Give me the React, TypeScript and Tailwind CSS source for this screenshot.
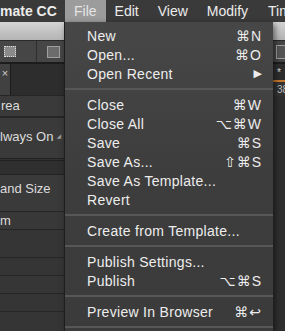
import React from 'react';

type Item = { label: string; keys?: string; arrow?: boolean } | 'sep';

const items: Item[] = [
  { label: 'New', keys: '⌘N' },
  { label: 'Open...', keys: '⌘O' },
  { label: 'Open Recent', arrow: true },
  'sep',
  { label: 'Close', keys: '⌘W' },
  { label: 'Close All', keys: '⌥⌘W' },
  { label: 'Save', keys: '⌘S' },
  { label: 'Save As...', keys: '⇧⌘S' },
  { label: 'Save As Template...' },
  { label: 'Revert' },
  'sep',
  { label: 'Create from Template...' },
  'sep',
  { label: 'Publish Settings...' },
  { label: 'Publish', keys: '⌥⌘S' },
  'sep',
  { label: 'Preview In Browser', keys: '⌘↩' },
  'sep',
];

const font = { fontFamily: '"Liberation Sans", Arial, "DejaVu Sans", sans-serif' };

const MenuBar = () => (
  <div className="flex h-[22px] items-center whitespace-nowrap bg-[#3a3a3a] text-[14px] text-[#ececec]">
    <span className="w-[65px] shrink-0 font-bold">mate CC</span>
    <span className="flex h-full shrink-0 items-center bg-[#9c9c9c] px-[9px] text-[#e4e4e4]">File</span>
    <span className="ml-[9px] shrink-0">Edit</span>
    <span className="ml-[19px] shrink-0">View</span>
    <span className="ml-[19px] shrink-0">Modify</span>
    <span className="ml-[20px] shrink-0">Tim</span>
  </div>
);

const LeftPanels = () => (
  <div className="flex w-[65px] shrink-0 flex-col whitespace-nowrap text-[13px] text-[#dcdcdc]">
    <div className="h-[18px] bg-gradient-to-b from-[#d4d4d4] to-[#b4b4b4]" />
    <div className="flex h-[22px] items-center gap-[20px] border-t border-[#2a2a2a] bg-[#464646] pl-[4px]">
      <div className="h-[11px] w-[12px] border border-dotted border-[#e0e0e0] bg-[#8a8a8a]" />
      <div className="flex h-full items-center border-l border-[#2e2e2e] pl-[10px]">
        <div className="h-[12px] w-[13px] border border-[#a0a0a0] bg-[#6c6c6c]" />
      </div>
    </div>
    <div className="h-[2px] bg-[#1c1c1c]" />
    <div className="flex h-[31px] bg-[#2d2d2d]">
      <div className="flex w-[11px] items-start justify-center border-r border-[#1a1a1a] bg-[#414141] pt-[4px] text-[11px] leading-none text-[#cfcfcf]">×</div>
    </div>
    <div className="h-[1px] bg-[#262626]" />
    <div className="flex h-[20px] items-center bg-[#3a3a3a] pl-[1px]">rea</div>
    <div className="h-[2px] bg-[#262626]" />
    <div className="flex h-[40px] items-start bg-[#3a3a3a] pt-[9px]">
      <span>lways On</span>
      <span className="ml-[3px] mt-[6px] text-[6px] leading-none text-[#999]">◢</span>
    </div>
    <div className="h-[3px] border-y border-[#222] bg-[#333]" />
    <div className="h-[13px] bg-[#2f2f2f]" />
    <div className="h-[1px] bg-[#222]" />
    <div className="flex h-[36px] items-start bg-[#3a3a3a] pt-[4px]">and Size</div>
    <div className="h-[1px] bg-[#252525]" />
    <div className="flex h-[17px] items-center bg-[#383838]">m</div>
    <div className="h-[1px] bg-[#252525]" />
    <div className="h-[27px] bg-[#353535]" />
    <div className="h-[1px] bg-[#252525]" />
    <div className="h-[17px] bg-[#353535]" />
    <div className="h-[1px] bg-[#252525]" />
    <div className="h-[17px] bg-[#363636]" />
    <div className="h-[1px] bg-[#252525]" />
    <div className="h-[17px] bg-[#353535]" />
    <div className="h-[1px] bg-[#252525]" />
    <div className="flex-1 bg-[#353535]" />
  </div>
);

const RightPanels = () => (
  <div className="flex flex-1 flex-col text-[10px] text-[#ddd]">
    <div className="h-[18px] bg-gradient-to-b from-[#d4d4d4] to-[#b4b4b4]" />
    <div className="flex h-[22px] items-center border-t border-[#2a2a2a] bg-[#464646] pl-[3px]">
      <div className="h-[14px] w-[14px] border border-[#a0a0a0] bg-[#555]" />
    </div>
    <div className="h-[2px] bg-[#1c1c1c]" />
    <div className="flex h-[16px] items-center bg-[#2d2d2d] pl-[4px]">*</div>
    <div className="flex h-[16px] items-center border-t-2 border-[#c8772a] bg-[#333] pl-[4px] text-[#bbb]">38</div>
    <div className="flex-1 bg-[#2f2f2f]" />
  </div>
);

export default function App() {
  return (
    <div className="relative flex h-[331px] w-[285px] flex-col overflow-hidden bg-[#333]" style={font}>
      <MenuBar />
      <div className="flex flex-1">
        <LeftPanels />
        <div className="w-[208px] shrink-0" />
        <RightPanels />
      </div>
      <div className="absolute left-[64px] top-[22px] w-[209px] border-l border-[#1e1e1e] bg-gradient-to-b from-[#474747] via-[#3d3d3d] to-[#3b3b3b] pt-[4px] text-[14px] text-[#ededed] shadow-[2px_2px_6px_rgba(0,0,0,0.5)]">
        {items.map((it, i) =>
          it === 'sep' ? (
            <div key={i} className="flex h-[12px] items-center">
              <div className="h-[2px] w-full bg-[#575757]" />
            </div>
          ) : (
            <div key={i} className="flex h-[19px] items-center justify-between pl-[22px] pr-[11px] leading-none">
              <span className="tracking-[0.3px]">{it.label}</span>
              {it.keys && (
                <span className="tracking-[1px]" style={{ fontFamily: '"Liberation Sans", "DejaVu Sans", sans-serif' }}>{it.keys}</span>
              )}
              {it.arrow && <span className="text-[11px]">▶</span>}
            </div>
          )
        )}
      </div>
    </div>
  );
}
